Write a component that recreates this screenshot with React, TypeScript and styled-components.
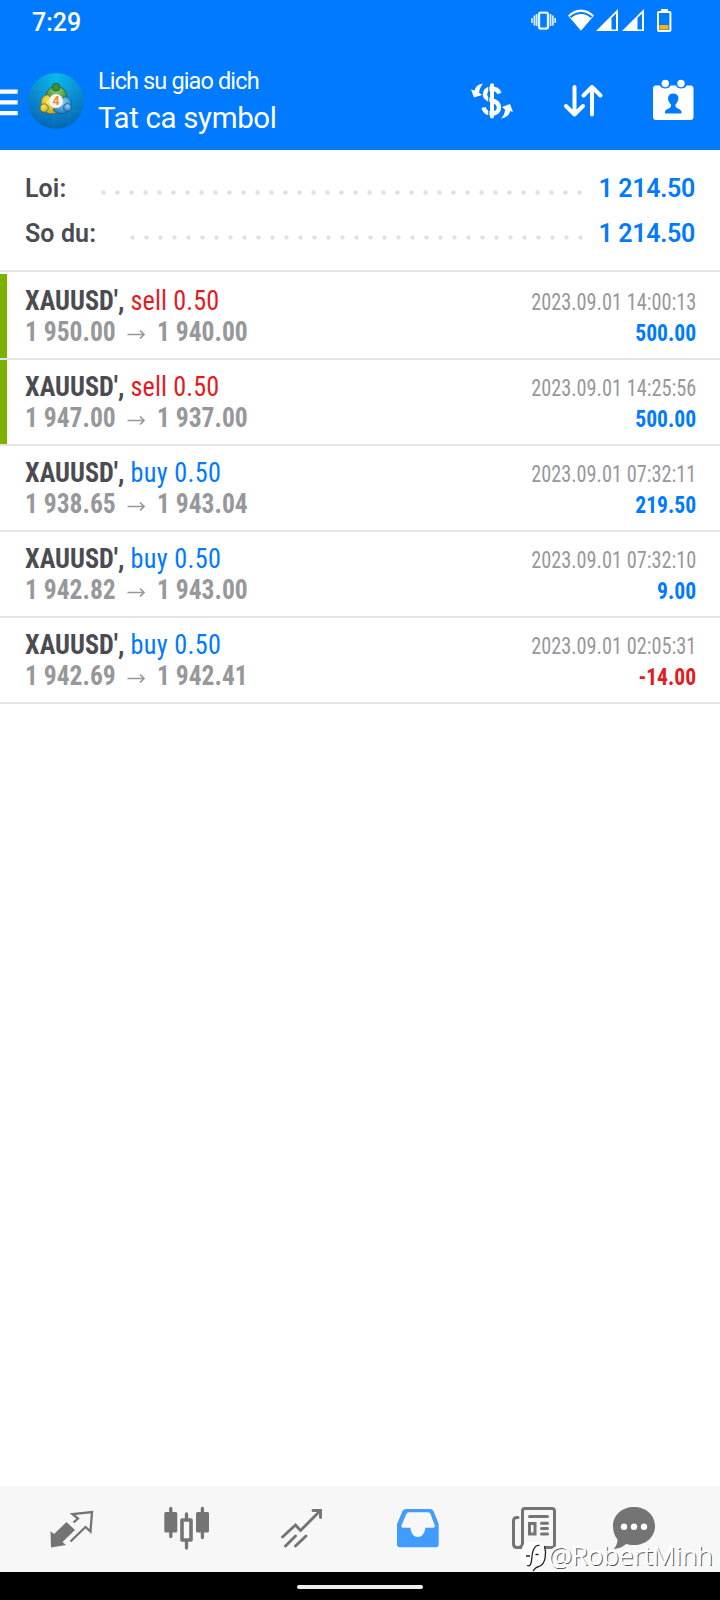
import React from "react";
import styled, { createGlobalStyle } from "styled-components";

const GlobalStyle = createGlobalStyle`
  * { box-sizing: border-box; }
  body { margin: 0; background: #fff; font-family: Roboto, "Liberation Sans", sans-serif; }
  svg { display: block; flex: none; }
`;

const Screen = styled.div`
  position: relative;
  width: 720px;
  height: 1600px;
  display: flex;
  flex-direction: column;
  background: #fff;
  overflow: hidden;
`;

const StatusBar = styled.div`
  height: 50px;
  flex: none;
  padding: 0 48px 0 32px;
  display: flex;
  justify-content: space-between;
  background: #007aff;
  color: #fff;
`;

const Clock = styled.div`
  padding-top: 8px;
  font-size: 25px;
  line-height: 29px;
  font-weight: 500;
`;

const Header = styled.header`
  height: 100px;
  flex: none;
  display: flex;
  background: #007aff;
  color: #fff;
`;

const Titles = styled.div`
  flex: 1;
  padding: 18px 0 0 14px;
`;

const Title = styled.div<{ $size: number; $spacing: number; $line: number }>`
  font-size: ${(p) => p.$size}px;
  letter-spacing: ${(p) => p.$spacing}px;
  line-height: ${(p) => p.$line}px;
  white-space: nowrap;
`;

const Actions = styled.div`
  display: flex;
  gap: 40px;
  padding-right: 20px;
`;

const Summary = styled.section`
  height: 122px;
  flex: none;
  padding: 16px 25px 0;
  border-bottom: 2px solid #e5e5e5;
`;

const SummaryRow = styled.div`
  height: 45px;
  display: flex;
  align-items: center;
  font-size: 25px;
  font-weight: 650;
  color: #4b4b52;
`;

const Label = styled.div<{ $width: number }>`
  width: ${(p) => p.$width}px;
  letter-spacing: 0.1px;
  white-space: nowrap;
`;

const Leader = styled.div<{ $right: number }>`
  flex: 1;
  height: 5px;
  margin: 8px ${(p) => p.$right}px 0 0;
  background: radial-gradient(circle at 2.5px 2.5px, #e2e2e2 1.9px, transparent 2.5px) 0 0 / 14px 5px repeat-x;
`;

const Amount = styled.div`
  width: 96px;
  display: flex;
  justify-content: flex-end;
  letter-spacing: -0.3px;
  white-space: nowrap;
  color: #007aff;
`;

const Deals = styled.main`
  flex: 1;
  padding-top: 2px;
`;

const Deal = styled.article<{ $marked: boolean }>`
  height: 86px;
  display: flex;
  justify-content: space-between;
  padding: 10px 24px 0 25px;
  border-bottom: 2px solid #e5e5e5;
  box-shadow: inset 7px 0 ${(p) => (p.$marked ? "#7eb000" : "#fff")};
  font-stretch: 75%;
`;

const DealLeft = styled.div`
  padding-top: 1px;
`;

const DealRight = styled.div`
  text-align: right;
`;

const Instrument = styled.div`
  font-size: 28px;
  line-height: 31px;
  font-weight: 700;
  color: #4b4b52;
  white-space: nowrap;
  transform: scaleX(0.935);
  transform-origin: left;
`;

const Side = styled.span<{ $side: string }>`
  font-weight: 400;
  letter-spacing: ${(p) => (p.$side === "sell" ? 0.1 : 0.35)}px;
  color: ${(p) => (p.$side === "sell" ? "#e31b1f" : "#007aff")};
`;

const Prices = styled.div`
  display: flex;
  align-items: center;
  line-height: 31px;
  color: #97989c;
`;

const Price = styled.div`
  width: 89.5px;
  font-size: 28px;
  font-weight: 700;
  white-space: nowrap;
  transform: scaleX(0.912);
  transform-origin: left;
`;

const Time = styled.div`
  padding-top: 3px;
  font-size: 23.5px;
  line-height: 31px;
  color: #97989c;
  white-space: nowrap;
  transform: scaleX(0.863);
  transform-origin: right;
`;

const Profit = styled.div<{ $loss: boolean }>`
  font-size: 23.5px;
  line-height: 31px;
  font-weight: 700;
  color: ${(p) => (p.$loss ? "#e31b1f" : "#007aff")};
  transform: scaleX(0.92);
  transform-origin: right;
`;

const TabBar = styled.nav`
  height: 86px;
  flex: none;
  display: grid;
  grid-template-columns: 115px 115px 116px 115px 100px 54px;
  padding: 14px 0 0 45px;
  background: #f7f7f7;
`;

const GestureBar = styled.div`
  height: 28px;
  flex: none;
  display: flex;
  justify-content: center;
  padding-top: 13px;
  background: #000;
`;

const Pill = styled.div`
  width: 126px;
  height: 4px;
  border-radius: 2px;
  background: #efefef;
`;

const Watermark = styled.div`
  position: absolute;
  right: 7px;
  bottom: 28px;
  display: flex;
  align-items: center;
  font-family: "Open Sans", "Noto Sans", sans-serif;
  font-size: 26.5px;
  line-height: 34px;
  font-weight: 300;
  color: #fff;
  text-shadow: -1px -1px 0 #fff, 1px 1px 0 #555;
`;

const deals = [
  { side: "sell", open: "1 950.00", close: "1 940.00", time: "2023.09.01 14:00:13", profit: "500.00", marked: true },
  { side: "sell", open: "1 947.00", close: "1 937.00", time: "2023.09.01 14:25:56", profit: "500.00", marked: true },
  { side: "buy", open: "1 938.65", close: "1 943.04", time: "2023.09.01 07:32:11", profit: "219.50", marked: false },
  { side: "buy", open: "1 942.82", close: "1 943.00", time: "2023.09.01 07:32:10", profit: "9.00", marked: false },
  { side: "buy", open: "1 942.69", close: "1 942.41", time: "2023.09.01 02:05:31", profit: "-14.00", marked: false },
];

const StatusIcons = () => (
  <svg width="142" height="50" viewBox="530 0 142 50" fill="#fff">
    <rect x="539" y="12.600" width="9" height="16" rx="2" fill="none" stroke="#fff" strokeOpacity=".9" strokeWidth="2.400" />
    <path d="M532 18v5M534.400 15.500v10M536.600 14v12M550.600 14v12M552.900 15.500v10M555.200 18v5" stroke="#fff" strokeOpacity=".85" strokeWidth="1.700" />
    <path d="M568 15.500C575 7.500 587 7.500 594 15.500L581 30.800Z" />
    <path d="M570.500 17.200C577 11.500 585 11.500 591.500 17.200" fill="none" stroke="#007aff" strokeWidth="2" />
    {[596, 622].map((x) => (
      <React.Fragment key={x}>
        <path d={`M${x} 31L${x + 22} 9V31Z`} />
        <path d={`M${x + 15.5} 18L${x + 20} 13.500V29.500H${x + 15.5}Z`} fill="#007aff" />
      </React.Fragment>
    ))}
    <rect x="661" y="9" width="7" height="3" />
    <rect x="658" y="12" width="12.400" height="19" rx=".8" fill="none" stroke="#fff" strokeWidth="2" />
    <rect x="659.500" y="25" width="9" height="4.500" fill="#fab50a" />
  </svg>
);

const MenuIcon = () => (
  <svg width="28" height="100" viewBox="0 50 28 100" fill="#fff">
    <path d="M0 89.500h17.700v4.300H0zM0 100.300h17.700v4.300H0zM0 111h17.700v4.200H0z" />
  </svg>
);

const LogoIcon = () => (
  <svg width="56" height="100" viewBox="28 50 56 100">
    <defs>
      <radialGradient id="bg" cx=".5" cy=".08" r=".9">
        <stop offset="0" stopColor="#08b9ef" />
        <stop offset=".5" stopColor="#0a8fd2" />
        <stop offset="1" stopColor="#0567b4" />
      </radialGradient>
      <radialGradient id="green" cx=".5" cy=".2" r=".8">
        <stop offset="0" stopColor="#8ccf70" />
        <stop offset="1" stopColor="#217b2b" />
      </radialGradient>
      <radialGradient id="yellow" cx=".45" cy=".35" r=".8">
        <stop offset="0" stopColor="#f5ea5c" />
        <stop offset="1" stopColor="#b59c18" />
      </radialGradient>
      <radialGradient id="blue" cx=".5" cy=".3" r=".8">
        <stop offset="0" stopColor="#8ad2fa" />
        <stop offset="1" stopColor="#1671b8" />
      </radialGradient>
    </defs>
    <circle cx="56" cy="101" r="28" fill="url(#bg)" />
    <path d="M40 78V124M54 73V129M69 77V125M33 89H79M29 111H83" stroke="#35a9df" strokeOpacity=".18" strokeWidth="1" />
    <circle cx="56.300" cy="96.500" r="10.300" fill="url(#green)" stroke="#185920" strokeWidth=".7" />
    <path d="M42 107C39 99 44 94 49 95L58 112C53 115 46 115 42 107Z" fill="url(#yellow)" stroke="#655c18" strokeWidth=".7" />
    <path d="M70 109C73 101 69 96 64 97L53 110C58 115 67 115 70 109Z" fill="url(#blue)" stroke="#164d75" strokeWidth=".7" />
    <circle cx="56" cy="87.200" r="3.900" fill="#438c35" stroke="#185920" strokeWidth=".7" />
    <circle cx="44.200" cy="108" r="4.200" fill="url(#yellow)" stroke="#655c18" strokeWidth=".7" />
    <circle cx="67.500" cy="107.500" r="4" fill="url(#blue)" stroke="#164d75" strokeWidth=".7" />
    <circle cx="56" cy="101" r="7" fill="#f6f4f4" />
    <text x="56" y="105.300" textAnchor="middle" fontSize="12.500" fontWeight="700" fill="#f28a30">4</text>
  </svg>
);

const CurrencyIcon = () => (
  <svg width="52" height="100" viewBox="466 50 52 100" fill="none" stroke="#fff">
    <path d="M499.500 93.500C498 90 495 88.500 491.500 88.500C487 88.500 485 91.500 485 94.500C485 98 488 99.500 491.500 100.500C496 101.500 499 103.500 499 107.500C499 111.500 496 113.500 492 113.500C487 113.500 484.500 111.500 483.500 107.500" strokeWidth="4.400" />
    <path d="M488.800 84V118" stroke="#007aff" strokeWidth="1.200" />
    <path d="M492 85.200V116.500" strokeWidth="4" strokeLinecap="round" />
    <path d="M483 83.500C477.500 84.500 475.500 87 474.700 90.500L471 89.500L474 97.500L482 95L479 92.500C479.500 89 481 86 483 83.500Z" fill="#fff" stroke="none" />
    <path d="M501 118.500C507 117.500 509.500 114.500 510 111L513 112L510 104L502 107L505 109.500C505 113 503.500 116 501 118.500Z" fill="#fff" stroke="none" />
  </svg>
);

const SortIcon = () => (
  <svg width="49" height="100" viewBox="558 50 49 100" fill="none" stroke="#fff" strokeWidth="4" strokeLinecap="round" strokeLinejoin="round">
    <path d="M574.500 87V114.500M566 106L574.500 114.500L583 106M592 114.500V87M583.500 95.500L592 87L600.500 95.500" />
  </svg>
);

const CalendarIcon = () => (
  <svg width="53" height="100" viewBox="647 50 53 100" fill="#fff">
    <path d="M656 85.500H660C661 89.500 669.500 89.500 670.500 85.500H676C677 89.500 685.500 89.500 686.500 85.500H690.500Q693.500 85.500 693.500 88.500V117Q693.500 120 690.500 120H656Q653 120 653 117V88.500Q653 85.500 656 85.500Z" />
    <circle cx="665.300" cy="83.500" r="3.700" />
    <circle cx="681" cy="83.500" r="3.700" />
    <path d="M665 113.500V111.500C665.500 109 671 108.500 671 106V104.500C667 101 666.500 93.500 673.200 93.500C680 93.500 679.500 101 675.500 104.500V106C675.500 108.500 681 109 681.500 111.500V113.500Z" fill="#007aff" />
  </svg>
);

const ArrowIcon = () => (
  <svg width="42" height="31" viewBox="115.500 317 42 31" fill="none" stroke="#97989c" strokeWidth="1.700">
    <path d="M128 335.500H144M140.500 331.500L144.500 335.500L140.500 339.500" />
  </svg>
);

const TradeIcon = () => (
  <svg width="54" height="60" viewBox="45 1500 54 60">
    <path d="M50.500 1531L54 1534L66.500 1522L75 1530L62.500 1542L66 1545L51 1547.500Z" fill="#747474" />
    <path d="M73.500 1522.500L78 1518.500L72.500 1514L92 1512L90.500 1531.500L85.500 1527L70.500 1541.500" fill="none" stroke="#747474" strokeWidth="2.300" />
  </svg>
);

const ChartIcon = () => (
  <svg width="54" height="60" viewBox="160 1500 54 60" fill="#747474">
    <rect x="164.300" y="1512" width="13" height="20.500" rx="1.500" />
    <rect x="196" y="1512" width="13" height="20.500" rx="1.500" />
    <path d="M170.800 1508.500V1536.500M202.400 1508.500V1537.500M186.500 1514V1519M186.500 1541V1548" stroke="#747474" strokeWidth="3.300" strokeLinecap="round" />
    <rect x="182" y="1520" width="9" height="20" fill="none" stroke="#747474" strokeWidth="3.600" strokeLinejoin="round" />
  </svg>
);

const TrendIcon = () => (
  <svg width="54" height="60" viewBox="275 1500 54 60" fill="none" stroke="#747474" strokeWidth="2.900" strokeLinecap="round">
    <path d="M282.500 1537L295.500 1525L300.500 1530.500L320 1511M285.500 1546L295.500 1536M295.500 1546L306 1536" />
    <path d="M313 1510.500H320.500V1517.500" />
  </svg>
);

const InboxIcon = () => (
  <svg width="54" height="60" viewBox="391 1500 54 60">
    <path fillRule="evenodd" fill="#419cff" d="M406 1509H430Q432.500 1509 433.500 1511L438.700 1524V1544.500Q438.700 1547.200 436 1547.200H400Q397 1547.200 397 1544.500V1524L402.500 1511Q403.500 1509 406 1509ZM409 1512.200Q407 1512.200 406.300 1514L401.500 1525.500Q401 1527.700 403 1527.700H410.500C411 1540 424.500 1540 425.300 1527.700H433Q435.500 1527.700 434.800 1525.500L430.500 1514Q429.800 1512.200 428 1512.200Z" />
  </svg>
);

const NewsIcon = () => (
  <svg width="54" height="60" viewBox="506 1500 54 60" fill="none" stroke="#747474" strokeWidth="3" strokeLinecap="round">
    <path d="M518 1517.500H517Q513.500 1517.500 513.500 1521V1544Q513.500 1547.500 517 1547.500H552Q554.500 1547.500 554.500 1545V1511Q554.500 1508.500 552 1508.500H525Q522.500 1508.500 522.500 1511V1543Q522.500 1547.500 518 1547.500" />
    <path d="M529.500 1516.500H547.500M541.500 1523.300H547.500M541.500 1528.500H547.500M541.500 1534H547.500" />
    <rect x="529.500" y="1523.500" width="5.500" height="10.500" />
  </svg>
);

const ChatIcon = () => (
  <svg width="54" height="60" viewBox="606 1500 54 60">
    <path d="M634 1507C646 1507 655 1515 655 1526C655 1537 646 1545 634 1545C630.500 1545 628 1544.500 626 1544C622 1547.500 618.500 1548.500 613.500 1549C616.500 1546 617.500 1543 617.500 1539.500C614.500 1536 613 1531.500 613 1526C613 1515 622 1507 634 1507Z" fill="#747474" />
    <circle cx="624" cy="1526.700" r="3.200" fill="#fff" />
    <circle cx="634" cy="1526.700" r="3.200" fill="#fff" />
    <circle cx="644" cy="1526.700" r="3.200" fill="#fff" />
  </svg>
);

const WatermarkLogo = () => (
  <svg width="29" height="34" viewBox="519 1540 29 34">
    <path d="M529 1544H536C542 1544 545 1549 545 1556C545 1563 542 1567.500 536 1568.500L532 1573L530 1568.500C523 1568.500 520 1563 520 1557C520 1549 523 1544 529 1544Z" fill="#fff" />
    <path d="M525 1558H529M537.500 1556.500H534.500M526 1567.500C532 1570 530 1558 532 1553C533.500 1548.500 536 1547 538.500 1547.500M543.500 1548C545.500 1555 545 1566 538 1568.500C534 1569 534 1571 532 1573" fill="none" stroke="#222" strokeWidth="1.300" />
  </svg>
);

export default function App() {
  return (
    <Screen>
      <GlobalStyle />
      <StatusBar>
        <Clock>7:29</Clock>
        <StatusIcons />
      </StatusBar>
      <Header>
        <MenuIcon />
        <LogoIcon />
        <Titles>
          <Title $size={23.5} $spacing={-0.87} $line={26}>Lich su giao dich</Title>
          <Title $size={29.5} $spacing={-0.37} $line={48}>Tat ca symbol</Title>
        </Titles>
        <Actions>
          <CurrencyIcon />
          <SortIcon />
          <CalendarIcon />
        </Actions>
      </Header>
      <Summary>
        <SummaryRow>
          <Label $width={76}>Loi:</Label>
          <Leader $right={15} />
          <Amount>1 214.50</Amount>
        </SummaryRow>
        <SummaryRow>
          <Label $width={105}>So du:</Label>
          <Leader $right={14} />
          <Amount>1 214.50</Amount>
        </SummaryRow>
      </Summary>
      <Deals>
        {deals.map((d) => (
          <Deal key={d.time} $marked={d.marked}>
            <DealLeft>
              <Instrument>
                XAUUSD', <Side $side={d.side}>{d.side} 0.50</Side>
              </Instrument>
              <Prices>
                <Price>{d.open}</Price>
                <ArrowIcon />
                <Price>{d.close}</Price>
              </Prices>
            </DealLeft>
            <DealRight>
              <Time>{d.time}</Time>
              <Profit $loss={d.profit.startsWith("-")}>{d.profit}</Profit>
            </DealRight>
          </Deal>
        ))}
      </Deals>
      <TabBar>
        <TradeIcon />
        <ChartIcon />
        <TrendIcon />
        <InboxIcon />
        <NewsIcon />
        <ChatIcon />
      </TabBar>
      <GestureBar>
        <Pill />
      </GestureBar>
      <Watermark>
        <WatermarkLogo />
        @RobertMinh
      </Watermark>
    </Screen>
  );
}
